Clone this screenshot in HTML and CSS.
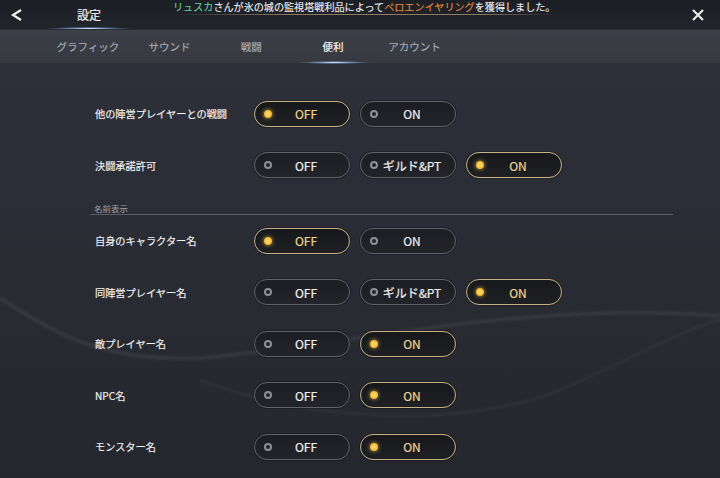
FILE: index.html
```html
<!DOCTYPE html>
<html lang="ja">
<head>
<meta charset="utf-8">
<link rel="stylesheet" href="styles.css">
</head>
<body>
<div class="screen">
  <svg class="bg-waves" width="720" height="478" viewBox="0 0 720 478">
    <defs>
      <filter id="blur" x="-10%" y="-10%" width="120%" height="120%"><feGaussianBlur stdDeviation="1.2"/></filter>
    </defs>
    <g filter="url(#blur)">
      <path d="M0 298 C60 338 110 362 200 358 C330 348 520 300 720 316" fill="none" stroke="rgba(200,205,220,0.08)" stroke-width="4"/>
      <path d="M200 380 C300 420 460 430 560 390 C630 360 680 330 720 320" fill="none" stroke="rgba(200,205,220,0.05)" stroke-width="3"/>
    </g>
  </svg>
  <header class="topbar">
    <div class="back">
      <svg width="14" height="14" viewBox="0 0 14 14"><path d="M11 2 L3 7 L11 12" fill="none" stroke="#f2f2f2" stroke-width="2.2" stroke-linejoin="miter"/></svg>
    </div>
    <div class="title">設定<span class="glow"></span></div>
    <div class="notice"><span class="green">リュスカ</span>さんが氷の城の監視塔戦利品によって<span class="orange">ペロエンイヤリング</span>を獲得しました。</div>
    <div class="close">
      <svg width="14" height="14" viewBox="0 0 14 14"><path d="M2 2 L12 12 M12 2 L2 12" fill="none" stroke="#e8e8e8" stroke-width="2.2"/></svg>
    </div>
  </header>
  <nav class="tabs">
    <div class="tab">グラフィック</div>
    <div class="tab">サウンド</div>
    <div class="tab">戦闘</div>
    <div class="tab active">便利<span class="glow"></span></div>
    <div class="tab">アカウント</div>
  </nav>
  <main class="content">
    <div class="row">
      <div class="label">他の陣営プレイヤーとの戦闘</div>
      <div class="opts">
        <div class="btn sel"><span class="dot"></span><span class="txt">OFF</span></div>
        <div class="btn"><span class="dot"></span><span class="txt">ON</span></div>
      </div>
    </div>
    <div class="row">
      <div class="label">決闘承諾許可</div>
      <div class="opts">
        <div class="btn"><span class="dot"></span><span class="txt">OFF</span></div>
        <div class="btn"><span class="dot"></span><span class="txt">ギルド&amp;PT</span></div>
        <div class="btn sel"><span class="dot"></span><span class="txt">ON</span></div>
      </div>
    </div>
    <div class="section">名前表示</div>
    <div class="row">
      <div class="label">自身のキャラクター名</div>
      <div class="opts">
        <div class="btn sel"><span class="dot"></span><span class="txt">OFF</span></div>
        <div class="btn"><span class="dot"></span><span class="txt">ON</span></div>
      </div>
    </div>
    <div class="row">
      <div class="label">同陣営プレイヤー名</div>
      <div class="opts">
        <div class="btn"><span class="dot"></span><span class="txt">OFF</span></div>
        <div class="btn"><span class="dot"></span><span class="txt">ギルド&amp;PT</span></div>
        <div class="btn sel"><span class="dot"></span><span class="txt">ON</span></div>
      </div>
    </div>
    <div class="row">
      <div class="label">敵プレイヤー名</div>
      <div class="opts">
        <div class="btn"><span class="dot"></span><span class="txt">OFF</span></div>
        <div class="btn sel"><span class="dot"></span><span class="txt">ON</span></div>
      </div>
    </div>
    <div class="row">
      <div class="label">NPC名</div>
      <div class="opts">
        <div class="btn"><span class="dot"></span><span class="txt">OFF</span></div>
        <div class="btn sel"><span class="dot"></span><span class="txt">ON</span></div>
      </div>
    </div>
    <div class="row">
      <div class="label">モンスター名</div>
      <div class="opts">
        <div class="btn"><span class="dot"></span><span class="txt">OFF</span></div>
        <div class="btn sel"><span class="dot"></span><span class="txt">ON</span></div>
      </div>
    </div>
  </main>
</div>
</body>
</html>
```
FILE: styles.css
```css
* { box-sizing: border-box; }
html, body { margin: 0; padding: 0; }
body {
  width: 720px;
  height: 478px;
  overflow: hidden;
  font-family: "Noto Sans CJK JP", "Noto Sans", sans-serif;
  color: #f0f0f0;
  background: #262930;
}
.screen {
  position: relative;
  width: 720px;
  height: 478px;
  background: linear-gradient(180deg, #2e313a 0%, #2a2d35 45%, #24272d 100%);
}
.bg-waves {
  position: absolute;
  left: 0;
  top: 0;
  pointer-events: none;
}
.topbar {
  position: relative;
  height: 29px;
  display: flex;
  align-items: center;
  background: linear-gradient(180deg, #1b1e24 0%, #22252c 100%);
}
.back {
  width: 36px;
  padding-left: 10px;
  display: flex;
  align-items: center;
  height: 29px;
}
.title {
  position: relative;
  margin-left: 41px;
  font-size: 12px;
  line-height: 14px;
  -webkit-text-stroke: 0.2px #f2f2f2;
  color: #f2f2f2;
  width: 24px;
  height: 29px;
  display: flex;
  align-items: center;
}
.title .glow {
  position: absolute;
  left: -30px;
  bottom: -1px;
  width: 84px;
  height: 3px;
  background: radial-gradient(ellipse at center, rgba(220,235,255,0.95) 0%, rgba(140,180,230,0.6) 35%, rgba(90,130,190,0) 70%);
}
.notice {
  margin-left: 72px;
  align-self: flex-start;
  font-size: 10.1px;
  line-height: 13px;
  -webkit-text-stroke: 0.1px currentColor;
  color: #f0f0f0;
  white-space: nowrap;
  padding-bottom: 1px;
  border-bottom: 1px solid transparent;
  border-image: linear-gradient(90deg, rgba(180,150,110,0) 0%, rgba(190,160,120,0.7) 30%, rgba(190,160,120,0.7) 80%, rgba(190,160,120,0) 100%) 1;
}
.green { color: #62d69d; }
.orange { color: #e5893a; }
.close {
  margin-left: auto;
  margin-right: 15px;
  display: flex;
  align-items: center;
}
.tabs {
  position: relative;
  height: 34px;
  display: flex;
  padding-left: 47px;
  background: linear-gradient(180deg, #3c3f47 0%, #363940 100%);
  border-top: 1px solid #2a2d33;
}
.tab {
  position: relative;
  width: 81.7px;
  text-align: center;
  font-size: 10.5px;
  -webkit-text-stroke: 0.15px currentColor;
  line-height: 33px;
  color: #a9acb3;
}
.tab.active { color: #ffffff; }
.tab .glow {
  position: absolute;
  left: 6px;
  bottom: -1px;
  width: 72px;
  height: 3px;
  background: radial-gradient(ellipse at center, rgba(220,235,255,0.95) 0%, rgba(140,180,230,0.6) 35%, rgba(90,130,190,0) 70%);
}
.content {
  position: relative;
  padding: 37.5px 46px 0 95px;
  display: flex;
  flex-direction: column;
}
.row {
  display: flex;
  align-items: center;
  height: 26px;
  margin-bottom: 25.5px;
}
.label {
  width: 159px;
  font-size: 10.2px;
  -webkit-text-stroke: 0.15px #f2f2f2;
  color: #f2f2f2;
}
.opts {
  display: flex;
  gap: 10px;
}
.btn {
  width: 96px;
  height: 26px;
  border-radius: 13px;
  border: 1.5px solid #5f626a;
  background: linear-gradient(180deg, #1c1e23 0%, #222429 100%);
  display: flex;
  align-items: center;
  padding-left: 9px;
  padding-right: 12px;
  box-shadow: 0 0 0 1px rgba(0,0,0,0.25);
}
.dot {
  width: 8px;
  height: 8px;
  border-radius: 50%;
  border: 2px solid #8d9096;
  background: #202226;
  flex: none;
}
.txt {
  flex: 1;
  margin-left: 3px;
  text-align: center;
  font-family: "Noto Sans CJK JP", "Liberation Sans", sans-serif;
  font-size: 12px;
  -webkit-text-stroke: 0.2px currentColor;
  color: #f0f0f0;
}
.btn.sel {
  border-color: #c8b283;
  background: linear-gradient(180deg, #17181c 0%, #1f2024 100%);
}
.btn.sel .dot {
  border: none;
  background: radial-gradient(circle, #ffe27a 0%, #f4bd3a 60%, #d99a22 100%);
  box-shadow: 0 0 4px rgba(255,200,70,0.8);
}
.btn.sel .txt { color: #f1d48f; }
.section {
  margin-top: -1px;
  margin-left: -5px;
  padding-left: 4px;
  font-size: 8.5px;
  line-height: 11px;
  color: #9ea1a8;
  border-bottom: 1px solid #5b5e66;
  margin-bottom: 13px;
  width: 583px;
  height: 12px;
}
```
